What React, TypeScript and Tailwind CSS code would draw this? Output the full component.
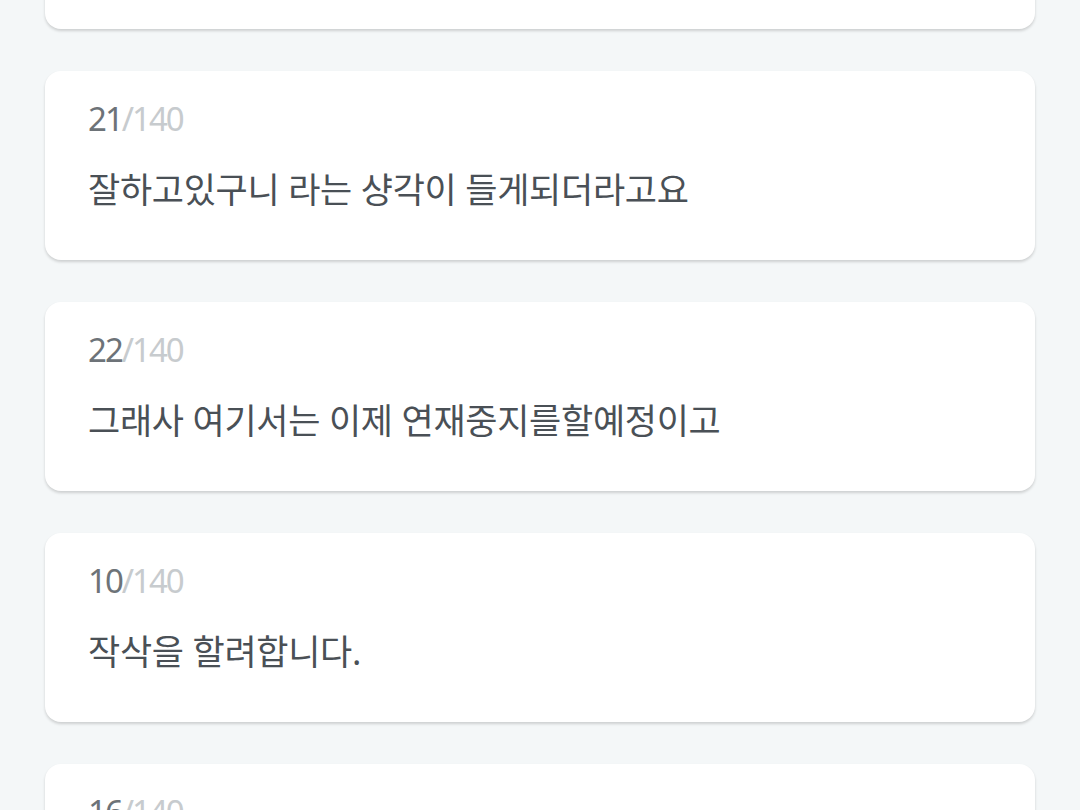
import React from "react";

interface Post {
  length: number;
  max: number;
  text: string;
}

const posts: Post[] = [
  { length: 18, max: 140, text: "요즘 이것저것 많이 생각해보니까" },
  { length: 21, max: 140, text: "잘하고있구니 라는 샹각이 들게되더라고요" },
  { length: 22, max: 140, text: "그래사 여기서는 이제 연재중지를할예정이고" },
  { length: 10, max: 140, text: "작삭을 할려합니다." },
  { length: 16, max: 140, text: "다음에 또 찾아뵙겠습니다." },
];

const PostCard: React.FC<{ post: Post }> = ({ post }) => {
  return (
    <div className="bg-white rounded-[16px] shadow-[0_2px_3px_rgba(0,0,0,0.16)] pl-[43px] pr-10 pt-[28px] pb-[50px]">
      <div className="text-[33px] leading-[40px] tracking-[-2px]">
        <span className="text-[#6d7378]">{post.length}</span>
        <span className="text-[#c7cbce]">/{post.max}</span>
      </div>
      <p className="mt-[31px] text-[35px] leading-[40px] text-[#4a5056] tracking-[-0.3px] whitespace-nowrap">
        {post.text}
      </p>
    </div>
  );
};

export default function App() {
  return (
    <div
      className="w-[1080px] h-[810px] overflow-hidden bg-[#f4f7f8]"
      style={{ fontFamily: '"Noto Sans", "Noto Sans CJK KR", sans-serif' }}
    >
      <div className="-mt-[160px] px-[45px] flex flex-col gap-[42px]">
        {posts.map((post, i) => (
          <PostCard key={i} post={post} />
        ))}
      </div>
    </div>
  );
}
